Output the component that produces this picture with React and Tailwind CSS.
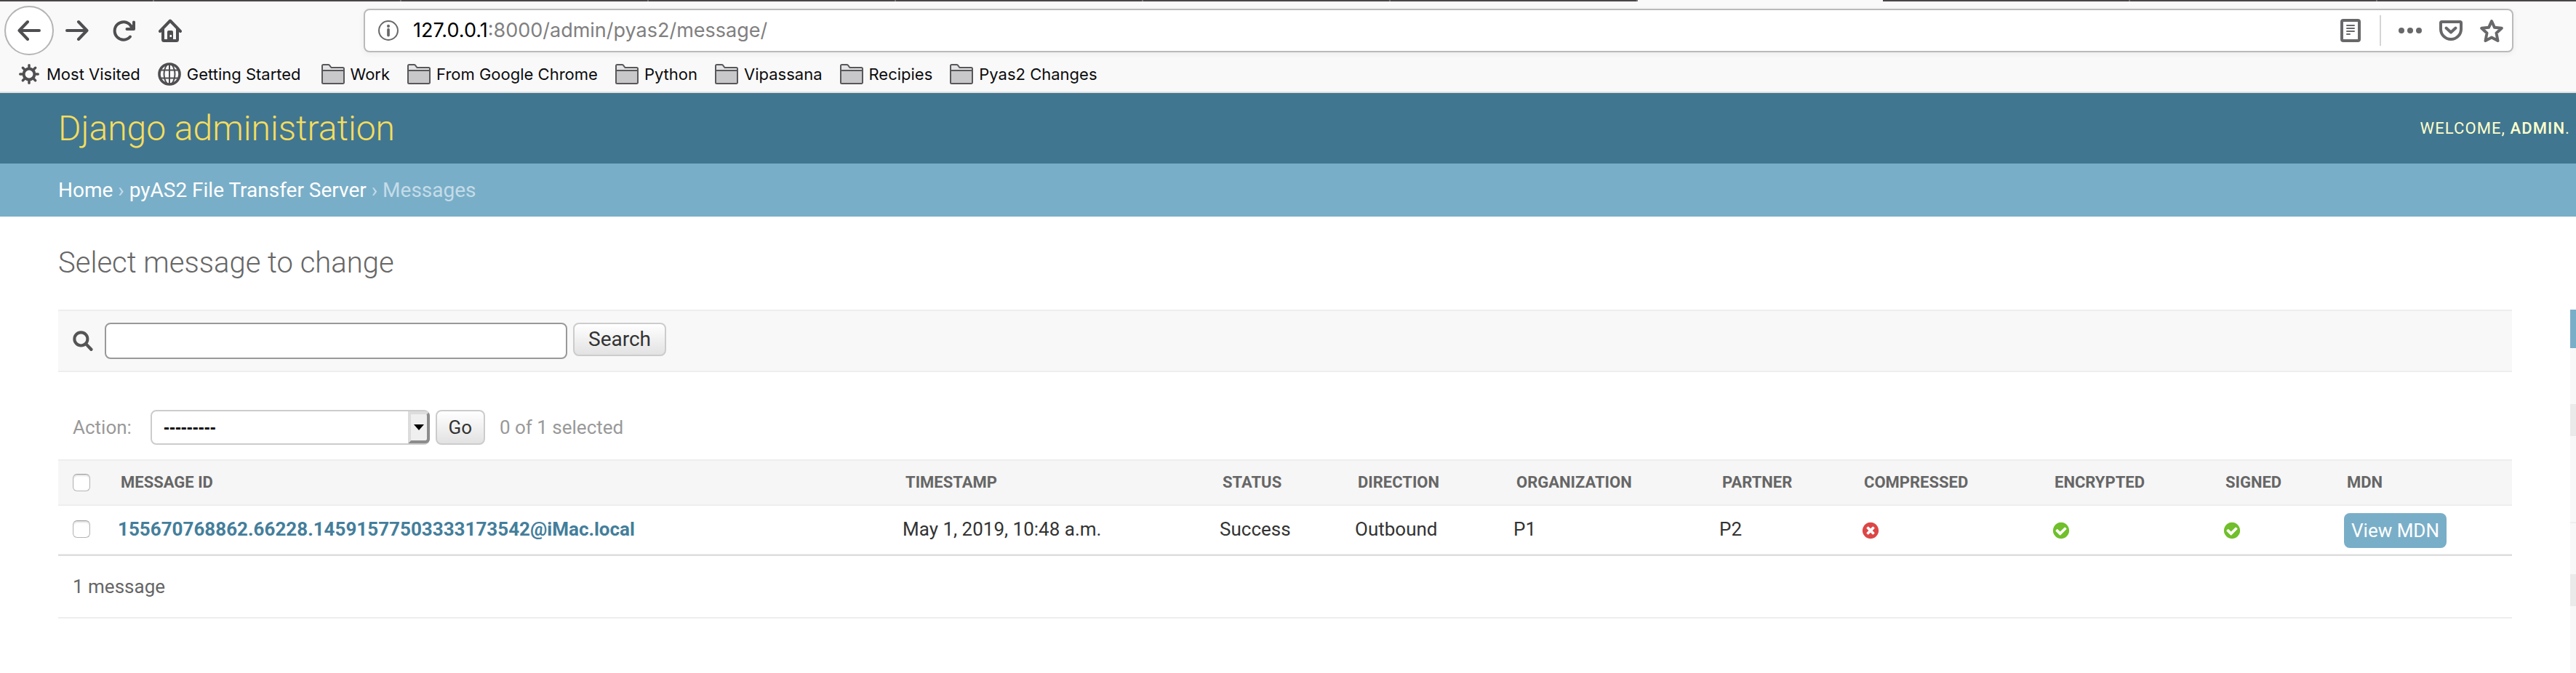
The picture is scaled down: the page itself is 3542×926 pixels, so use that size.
import React from "react";

const ink = "#4f4f52";
const soft = "#68686a";

function Svg({ size = "size-8", children }) {
  return (
    <svg viewBox="0 0 32 32" className={size + " block shrink-0"} fill="none" aria-hidden="true">
      {children}
    </svg>
  );
}

const BackIcon = () => (
  <Svg>
    <path d="M3 16h27M14 4 2.500 16 14 28" stroke={ink} strokeWidth="4" strokeLinecap="round" strokeLinejoin="round" />
  </Svg>
);

const ForwardIcon = () => (
  <Svg>
    <path d="M2 16h27M18 4l11.500 12L18 28" stroke={ink} strokeWidth="4" strokeLinecap="round" strokeLinejoin="round" />
  </Svg>
);

const ReloadIcon = () => (
  <Svg>
    <path d="M25.500 9A12.200 12.200 0 1 0 25 24.500" stroke={ink} strokeWidth="4" strokeLinecap="round" />
    <path d="M30 4.500V14h-9.500" stroke={ink} strokeWidth="4" strokeLinecap="round" strokeLinejoin="round" />
    <path d="M24 7.500 30 9v5h-5z" fill={ink} />
  </Svg>
);

const HomeIcon = () => (
  <Svg>
    <path d="M2 17 16 2.500 30 17" stroke={ink} strokeWidth="4" strokeLinecap="round" strokeLinejoin="round" />
    <path d="M6 14v14.500c0 .800.700 1.500 1.500 1.500h17c.800 0 1.500-.700 1.500-1.500V14" stroke={ink} strokeWidth="4" />
    <path d="M12 31V18a2 2 0 0 1 2-2h4a2 2 0 0 1 2 2v13z" fill={ink} />
    <rect x="15.500" y="22" width="2.500" height="3" fill="#f9f9fa" />
  </Svg>
);

const InfoIcon = () => (
  <Svg size="size-7">
    <circle cx="16" cy="16" r="14.800" stroke={soft} strokeWidth="2.300" />
    <circle cx="16" cy="9" r="2.300" fill={soft} />
    <path d="M16 14.500v9" stroke={soft} strokeWidth="4.200" strokeLinecap="round" />
  </Svg>
);

const ReaderIcon = () => (
  <Svg>
    <rect x="4" y="2" width="24" height="28" rx="2" stroke={soft} strokeWidth="4" />
    <path d="M11 9h10M11 13h10M11 17h10M11 21h4" stroke={soft} strokeWidth="2" strokeLinecap="round" />
  </Svg>
);

const DotsIcon = () => (
  <Svg>
    <circle cx="4" cy="16" r="4" fill={soft} />
    <circle cx="16" cy="16" r="4" fill={soft} />
    <circle cx="28" cy="16" r="4" fill={soft} />
  </Svg>
);

const PocketIcon = () => (
  <Svg>
    <path d="M3.500 4h25a1.500 1.500 0 0 1 1.500 1.500V14a14 14 0 0 1-28 0V5.500A1.500 1.500 0 0 1 3.500 4z" stroke={soft} strokeWidth="4" />
    <path d="M9.500 12.500 16 18.500l6.500-6" stroke={soft} strokeWidth="4" strokeLinecap="round" strokeLinejoin="round" />
  </Svg>
);

const StarIcon = () => (
  <Svg>
    <path
      d="M16 3l4 8.800 9.800 1-7.300 6.700L24.500 30 16 25.500 7.500 30l2-10.500L2.200 12.800l9.800-1z"
      stroke={soft}
      strokeWidth="4"
      strokeLinejoin="round"
    />
  </Svg>
);

const GearIcon = () => (
  <Svg size="size-7">
    <circle cx="16" cy="16" r="8.500" stroke={ink} strokeWidth="4.500" />
    {[0, 45, 90, 135, 180, 225, 270, 315].map((a) => (
      <path key={a} d="M16 2v4" stroke={ink} strokeWidth="4" strokeLinecap="round" transform={`rotate(${a} 16 16)`} />
    ))}
  </Svg>
);

const GlobeIcon = () => (
  <Svg>
    <circle cx="16" cy="16" r="14" stroke={ink} strokeWidth="3.600" />
    <ellipse cx="16" cy="16" rx="7.500" ry="14" stroke={ink} strokeWidth="2" />
    <path d="M16 2v28M4 10.500h24M4 21.500h24" stroke={ink} strokeWidth="2" />
  </Svg>
);

const FolderIcon = () => (
  <Svg>
    <path d="M1 10V4.500A1.500 1.500 0 0 1 2.500 3h7c.600 0 1 .200 1.400.700L13.500 7h16A1.500 1.500 0 0 1 31 8.500V11H1z" fill="#e3e3e5" />
    <path d="M1 11h30v16.500a1.500 1.500 0 0 1-1.500 1.500h-27A1.500 1.500 0 0 1 1 27.500z" fill="#c8c8ca" />
    <path
      d="M1 11h30M1 27.500v-23A1.500 1.500 0 0 1 2.500 3h7c.600 0 1 .200 1.400.700L13.500 7h16A1.500 1.500 0 0 1 31 8.500v19a1.500 1.500 0 0 1-1.500 1.500h-27A1.500 1.500 0 0 1 1 27.500z"
      stroke="#58585a"
      strokeWidth="2"
    />
  </Svg>
);

const MagnifierIcon = () => (
  <Svg size="size-7">
    <circle cx="13" cy="13" r="10.300" stroke="#555" strokeWidth="4.600" />
    <path d="M21 21l8 8.500" stroke="#555" strokeWidth="5" strokeLinecap="round" />
  </Svg>
);

function StatusIcon({ ok }) {
  return (
    <svg viewBox="0 0 1792 1792" className="block size-[26px]" role="img" aria-label={ok ? "True" : "False"}>
      {ok ? (
        <path
          fill="#70bf2b"
          d="M1412 734q0-28-18-46l-91-90q-19-19-45-19t-45 19l-408 407-226-226q-19-19-45-19t-45 19l-91 90q-18 18-18 46 0 27 18 45l362 362q19 19 45 19 27 0 46-19l543-543q18-18 18-45zm252 162q0 209-103 385.500t-279.500 279.500-385.500 103-385.500-103-279.500-279.500-103-385.500 103-385.500 279.500-279.500 385.500-103 385.500 103 279.500 279.500 103 385.500z"
        />
      ) : (
        <path
          fill="#dd4646"
          d="M1277 1122q0-26-19-45l-181-181 181-181q19-19 19-45 0-27-19-46l-90-90q-19-19-46-19-26 0-45 19l-181 181-181-181q-19-19-45-19-27 0-46 19l-90 90q-19 19-19 46 0 26 19 45l181 181-181 181q-19 19-19 45 0 27 19 46l90 90q19 19 46 19 26 0 45-19l181-181 181 181q19 19 45 19 27 0 46-19l90-90q19-19 19-46zm387-226q0 209-103 385.500t-279.500 279.500-385.500 103-385.500-103-279.500-279.500-103-385.500 103-385.500 279.500-279.500 385.500-103 385.500 103 279.500 279.500 103 385.500z"
        />
      )}
    </svg>
  );
}

const folders = ["Work", "From Google Chrome", "Python", "Vipassana", "Recipies", "Pyas2 Changes"];

function TabStrip() {
  return (
    <div className="flex h-0.5 bg-[#4a4647]">
      <div className="w-[212px] border-r-2 border-[#777475]" />
      {[1, 2, 3, 4, 5, 6].map((n) => (
        <div key={n} className="w-[340px] border-r-2 border-[#777475]" />
      ))}
      <div className="w-[337px] bg-[#f9f9fa]" />
      <div className="w-[340px] border-r-2 border-[#777475]" />
      <div className="w-[340px] border-r-2 border-[#777475]" />
    </div>
  );
}

function Browser() {
  return (
    <div className="border-b-2 border-[#e0e0e1] bg-[#f9f9fa] pb-1 font-['Inter','Liberation_Sans',sans-serif]">
      <TabStrip />
      <div className="flex h-20 items-center pr-[86px] pl-1.5">
        <button aria-label="Back" className="flex size-[68px] items-center justify-center rounded-full border-2 border-[#b4b4b5] bg-white">
          <BackIcon />
        </button>
        <div className="ml-4 flex gap-8">
          <button aria-label="Forward"><ForwardIcon /></button>
          <button aria-label="Reload"><ReloadIcon /></button>
          <button aria-label="Home"><HomeIcon /></button>
        </div>
        <div className="ml-[250px] flex h-[60px] flex-1 items-center rounded-lg border-2 border-[#bababb] bg-white pr-3 pl-[18px] shadow-[0_2px_8px_rgba(0,0,0,0.06)]">
          <button aria-label="Site information"><InfoIcon /></button>
          <div role="textbox" tabIndex={0} aria-label="Address" className="ml-5 flex-1 text-[27px] leading-9 text-[#808080]">
            <span className="text-black">127.0.0.1</span>:8000/admin/pyas2/message/
          </div>
          <button aria-label="Reader view"><ReaderIcon /></button>
          <div className="mx-6 h-[42px] w-0.5 bg-[#d4d4d4]" />
          <div className="flex gap-6">
            <button aria-label="Page actions"><DotsIcon /></button>
            <button aria-label="Save to Pocket"><PocketIcon /></button>
            <button aria-label="Bookmark this page"><StarIcon /></button>
          </div>
        </div>
      </div>
      <nav aria-label="Bookmarks" className="flex h-10 items-center gap-7 pl-[26px] text-[22px] leading-7 text-[#0c0c0d]">
        <div className="flex gap-6">
          <a href="#most" className="flex items-center gap-2.5"><GearIcon />Most Visited</a>
          <a href="#start" className="flex items-center gap-2"><GlobeIcon />Getting Started</a>
        </div>
        <div className="flex gap-6">
          {folders.map((name) => (
            <a key={name} href="#folder" className="flex items-center gap-2"><FolderIcon />{name}</a>
          ))}
        </div>
      </nav>
    </div>
  );
}

const checkbox =
  "block size-6 appearance-none rounded-md border border-[#b5b5b5] border-t-[#9a9a9a] bg-white shadow-[inset_0_2px_2px_rgba(0,0,0,0.12)] checked:bg-[#79aec8]";
const button =
  "rounded-lg border-2 border-[#ccc] bg-linear-to-b from-white to-[#e2e2e2] text-[#333]";

const columns = [
  ["Message ID", ""],
  ["Timestamp", "w-[436px]"],
  ["Status", "w-[186px]"],
  ["Direction", "w-[218px]"],
  ["Organization", "w-[283px]"],
  ["Partner", "w-[195px]"],
  ["Compressed", "w-[262px]"],
  ["Encrypted", "w-[235px]"],
  ["Signed", "w-[167px]"],
  ["MDN", "w-[247px]"],
];

const details = ["May 1, 2019, 10:48 a.m.", "Success", "Outbound", "P1", "P2"];

function ChangeList() {
  return (
    <main className="min-w-0 flex-1">
      <h1 className="mb-10 text-[40px] leading-[48px] font-light text-[#666]">Select message to change</h1>
      <form onSubmit={(e) => e.preventDefault()} className="flex items-start border-y-2 border-[#eee] bg-[#f8f8f8] px-5 py-4">
        <label htmlFor="searchbar" className="mr-4 self-center" aria-label="Search messages"><MagnifierIcon /></label>
        <input id="searchbar" type="text" className="h-[50px] w-[636px] rounded-lg border-2 border-[#999] bg-white px-3 text-[26px]" />
        <button type="submit" className={button + " ml-2 h-[46px] px-[19px] text-[28px] leading-8"}>Search</button>
      </form>
      <div className="mt-[52px] mb-5 flex h-12 items-center pl-5 text-[26px] leading-8 text-[#999]">
        <label htmlFor="action">Action:</label>
        <div className="relative ml-[26px] h-12 w-96">
          <select id="action" className="size-full appearance-none rounded-lg border-2 border-[#ccc] bg-white pl-4 font-['Liberation_Sans',sans-serif] text-[24px] leading-8 font-bold text-black">
            <option>---------</option>
          </select>
          <span className="pointer-events-none absolute top-0.5 right-0 flex h-11 w-[30px] items-center justify-center rounded-r-md border-4 border-t-[#dcdcdc] border-r-[#8c8c8c] border-b-[#8c8c8c] border-l-[#dcdcdc] bg-[#efefef]">
            <svg viewBox="0 0 14 8" className="h-2 w-3.5 shrink-0" aria-hidden="true"><path d="M0 0h14L7 8z" fill="#000" /></svg>
          </span>
        </div>
        <button className={button + " ml-2 h-12 w-[68px] text-[26px]"}>Go</button>
        <span className="ml-5">0 of 1 selected</span>
      </div>
      <table className="w-full table-fixed border-collapse border-b-2 border-[#ddd] text-left">
        <colgroup>
          <col className="w-[66px]" />
          {columns.map(([name, width]) => (
            <col key={name} className={width} />
          ))}
        </colgroup>
        <thead className="text-[22px] leading-7 text-[#666] uppercase">
          <tr className="h-16 bg-[#f6f6f6] shadow-[inset_0_2px_#eee,inset_0_-2px_#eee]">
            <th className="pl-5"><input type="checkbox" aria-label="Select all messages" className={checkbox} /></th>
            {columns.map(([name]) => (
              <th key={name} scope="col" className="pl-5 font-bold">{name}</th>
            ))}
          </tr>
        </thead>
        <tbody className="text-[26px] leading-8 text-[#333]">
          <tr className="h-[68px] shadow-[inset_0_-2px_#eee]">
            <td className="pb-1 pl-5"><input type="checkbox" aria-label="Select message" className={checkbox} /></td>
            <td className="pb-1 pl-4"><a href="#message" className="font-bold text-[#447e9b]">155670768862.66228.14591577503333173542@iMac.local</a></td>
            {details.map((text) => (
              <td key={text} className="pb-1 pl-4">{text}</td>
            ))}
            <td className="pl-4"><StatusIcon ok={false} /></td>
            <td className="pl-4"><StatusIcon ok /></td>
            <td className="pl-4"><StatusIcon ok /></td>
            <td className="pl-4"><a href="#mdn" className="inline-block rounded-lg bg-[#79aec8] px-2.5 py-2 align-middle text-white">View MDN</a></td>
          </tr>
        </tbody>
      </table>
      <p className="border-b-2 border-[#eee] px-5 py-[26px] text-[26px] leading-8 text-[#666]">1 message</p>
    </main>
  );
}

function FilterPanel() {
  return (
    <aside aria-label="Filter" className="mt-[88px] w-2 shrink-0 bg-[#f8f8f8]">
      <div className="h-[53px] bg-[#79aec8]" />
      <div className="mt-[77px] h-11 bg-[#eaeaea]" />
      <div className="mt-[118px] h-0.5 bg-[#eee]" />
      <div className="mt-[70px] h-11 bg-[#eaeaea]" />
    </aside>
  );
}

export default function App() {
  return (
    <div className="flex min-h-screen flex-col bg-white font-[Roboto,'Liberation_Sans',sans-serif]">
      <Browser />
      <header className="flex items-center justify-between bg-[#417690] py-5 pr-2 pl-20">
        <a href="#admin" className="text-[48px] leading-[57px] font-light text-[#f5dd5d]">Django administration</a>
        <div className="text-[22px] leading-7 tracking-wider text-[#ffc] uppercase">
          Welcome, <strong className="font-medium">admin</strong>.
        </div>
      </header>
      <nav aria-label="Breadcrumbs" className="bg-[#79aec8] px-20 py-5 text-[28px] leading-[33px] text-[#c4dce8]">
        <a href="#home" className="text-white">Home</a> ›{" "}
        <a href="#pyas2" className="text-white">pyAS2 File Transfer Server</a> › Messages
      </nav>
      <div className="flex flex-1 gap-20 pl-20">
        <div className="min-w-0 flex-1 pt-10">
          <ChangeList />
        </div>
        <div className="flex pt-10">
          <FilterPanel />
        </div>
      </div>
    </div>
  );
}
